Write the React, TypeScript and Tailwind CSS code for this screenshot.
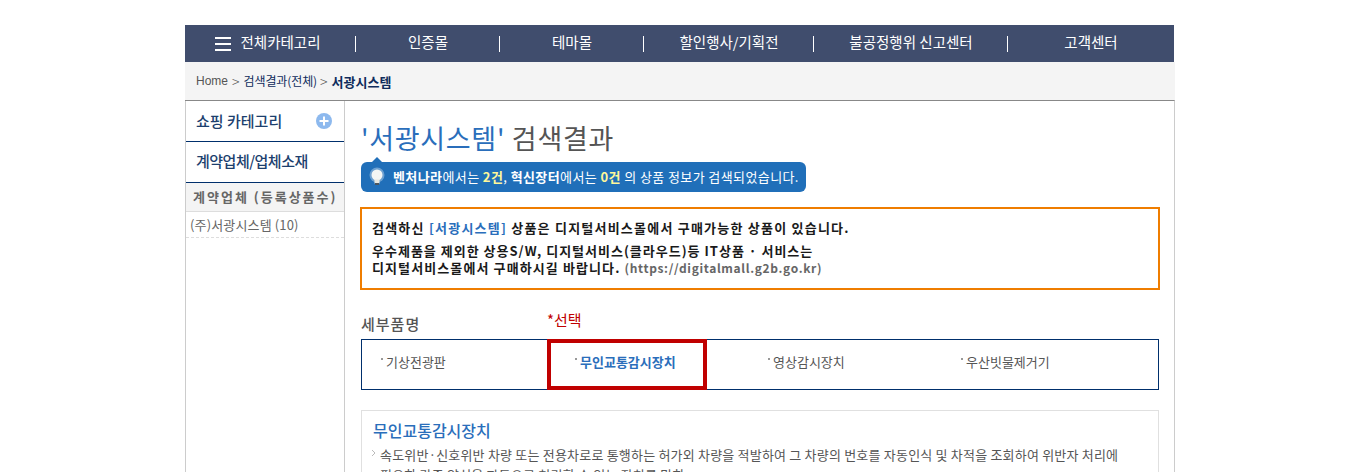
function NavItem({ label, width, last, icon }: { label: string; width: string; last?: boolean; icon?: boolean }) {
  return (
    <div className={`${width} h-full flex items-center justify-center relative`}>
      {icon && (
        <div className="flex flex-col gap-[4px] mr-[9px]">
          <span className="block w-[16px] h-[2px] bg-white" />
          <span className="block w-[16px] h-[2px] bg-white" />
          <span className="block w-[16px] h-[2px] bg-white" />
        </div>
      )}
      <span className={`text-[14.5px] text-white leading-none pb-[2px] ${icon ? 'mr-[5px]' : ''}`}>{label}</span>
      {!last && <span className="absolute right-0 top-[11px] w-px h-[16px] bg-white" />}
    </div>
  )
}

function Bulb() {
  return (
    <svg width="18" height="20" viewBox="0 0 18 20" className="shrink-0">
      <circle cx="9" cy="8" r="7.5" fill="#ffffff" opacity="0.35" />
      <circle cx="9" cy="8" r="5.5" fill="#f4f6f4" />
      <rect x="6.5" y="12.5" width="5" height="4" fill="#e8e8e0" />
      <rect x="7" y="16" width="4" height="2" fill="#4a5560" />
    </svg>
  )
}

export default function App() {
  const items = ['기상전광판', '무인교통감시장치', '영상감시장치', '우산빗물제거기']

  return (
    <div className="h-[472px] overflow-hidden bg-white pt-[25px] pl-[185px] font-['Noto_Sans_CJK_KR',sans-serif] text-[#333]">
      <div className="w-[990px]">
        {/* Top navigation */}
        <div className="w-[989px] h-[37px] bg-[#404d6d] flex">
          <NavItem label="전체카테고리" width="w-[171px]" icon />
          <NavItem label="인증몰" width="w-[144px]" />
          <NavItem label="테마몰" width="w-[144px]" />
          <NavItem label="할인행사/기획전" width="w-[170px]" />
          <NavItem label="불공정행위 신고센터" width="w-[194px]" />
          <NavItem label="고객센터" width="flex-1" last />
        </div>

        {/* Breadcrumb */}
        <div className="h-[38px] bg-[#f4f4f4] flex items-center pl-[11px] text-[12px] leading-none">
          <span className="text-[#555] font-['Liberation_Sans',sans-serif]">Home</span>
          <span className="text-[#555] text-[14px] font-light mx-[4px]">&gt;</span>
          <span className="text-[#0f2c5c] tracking-[-0.1px]">검색결과(전체)</span>
          <span className="text-[#555] text-[14px] font-light ml-[3px] mr-[4px]">&gt;</span>
          <span className="text-[#0f2c5c] text-[13px] font-bold">서광시스템</span>
        </div>

        {/* Body */}
        <div className="flex border-t border-t-[#888] border-r border-r-[#ccc] h-[400px]">
          {/* Sidebar */}
          <div className="w-[160px] shrink-0 border-l border-l-[#ccc] border-r border-r-[#ccc]">
            <div className="h-[41px] border-b border-b-[#002f6c] flex items-center justify-between pl-[10px] pr-[12px]">
              <span className="text-[15px] font-medium text-[#1c3f6e]">쇼핑 카테고리</span>
              <svg width="16" height="16" viewBox="0 0 16 16">
                <circle cx="8" cy="8" r="8" fill="#8db9ee" />
                <rect x="3.5" y="7" width="9" height="2" fill="#fff" />
                <rect x="7" y="3.5" width="2" height="9" fill="#fff" />
              </svg>
            </div>
            <div className="h-[41px] border-b border-b-[#002f6c] flex items-center pl-[10px] pb-[2px]">
              <span className="text-[15px] font-medium text-[#1c3f6e] tracking-[-0.5px]">계약업체/업체소재</span>
            </div>
            <div className="h-[29px] bg-[#f4f4f4] border-b border-b-[#ddd] flex items-center pl-[7px]">
              <span className="text-[13px] font-bold text-[#666] tracking-[2px] whitespace-nowrap">계약업체 (등록상품수)</span>
            </div>
            <div className="h-[26px] border-b border-dashed border-b-[#ddd] flex items-center pl-[4px]">
              <span className="text-[13px] text-[#666] tracking-[0.15px]">(주)서광시스템 (10)</span>
            </div>
          </div>

          {/* Main */}
          <div className="flex-1 pl-[16px] pr-[15px] pt-[19px]">
            <h1 className="text-[27px] leading-[36px] font-normal text-[#555] tracking-[0.7px]">
              <span className="text-[#2a6ebb]">'서광시스템'</span> 검색결과
            </h1>

            {/* Result bubble */}
            <div className="relative mt-[6px] w-[445px] h-[30px] bg-[#206fb9] rounded-[6px] flex items-center pl-[7px] text-[13px] tracking-[0.4px] text-white">
              <span className="absolute left-[10px] top-[-5px] w-0 h-0 border-l-[6px] border-r-[6px] border-b-[6px] border-l-transparent border-r-transparent border-b-[#206fb9]" />
              <Bulb />
              <span className="ml-[7px] whitespace-nowrap">
                <b>벤처나라</b>에서는 <b className="text-[#fff799]">2건</b>, <b>혁신장터</b>에서는 <b className="text-[#fff799]">0건</b> 의 상품 정보가 검색되었습니다.
              </span>
            </div>

            {/* Notice */}
            <div className="mt-[15px] -ml-px w-[800px] h-[83px] border-2 border-[#ef7d00] pl-[10px] pt-[10px] text-[13px] font-bold text-[#1a1a1a] tracking-[1.1px]">
              <p className="leading-[18px] tracking-[1.22px]">
                검색하신 <span className="text-[#2a6ebb]">[서광시스템]</span> 상품은 디지털서비스몰에서 구매가능한 상품이 있습니다.
              </p>
              <p className="mt-[5px] leading-[18px] tracking-[1px]">우수제품을 제외한 상용S/W, 디지털서비스(클라우드)등 IT상품 · 서비스는</p>
              <p className="-mt-px leading-[18px]">
                디지털서비스몰에서 구매하시길 바랍니다. <span className="text-[#666] text-[12px] tracking-[0.65px]">(https://digitalmall.g2b.go.kr)</span>
              </p>
            </div>

            {/* Sub items */}
            <div className="relative mt-[22px] h-[27px]">
              <span className="absolute left-0 top-[1px] text-[15px] font-medium text-[#555] tracking-[1px]">세부품명</span>
              <span className="absolute left-[186px] top-[-3px] text-[15px] text-[#c00000]">*선택</span>
            </div>
            <div className="relative w-[798px] h-[51px] border border-[#002f6c] flex">
              {items.map((item, i) => (
                <div key={item} className={`w-[193px] pt-[13px] ${i === 0 ? 'pl-[19px]' : 'pl-[20px]'} flex items-start`}>
                  <span className="w-[2px] h-[2px] bg-[#999] mt-[5px] mr-[3px]" />
                  <span className={`text-[13px] leading-[17px] ${i === 1 ? 'font-bold text-[#2a6ebb]' : 'text-[#555]'}`}>{item}</span>
                </div>
              ))}
              <div className="absolute left-[185px] top-[-1px] w-[160px] h-[51px] border-[4px] border-[#c00000]" />
            </div>

            {/* Detail */}
            <div className="mt-[20px] w-[798px] border border-[#e0e0e0] pl-[11px] pt-[8px] pb-[20px]">
              <h2 className="text-[16px] leading-[22px] font-medium text-[#2a6ebb]">무인교통감시장치</h2>
              <div className="mt-[4px] flex text-[13px] leading-[20px] text-[#555] tracking-[0.2px] whitespace-nowrap">
                <svg width="7" height="20" viewBox="0 0 7 20" className="shrink-0 -ml-[2px] mr-[2px]">
                  <path d="M1 5l3 3-3 3" fill="none" stroke="#bbb" strokeWidth="1" />
                </svg>
                <p>
                  속도위반·신호위반 차량 또는 전용차로로 통행하는 허가외 차량을 적발하여 그 차량의 번호를 자동인식 및 차적을 조회하여 위반자 처리에
                  <br />
                  필요한 각종 양식을 자동으로 처리할 수 있는 장치를 말함.
                </p>
              </div>
            </div>
          </div>
        </div>
      </div>
    </div>
  )
}
